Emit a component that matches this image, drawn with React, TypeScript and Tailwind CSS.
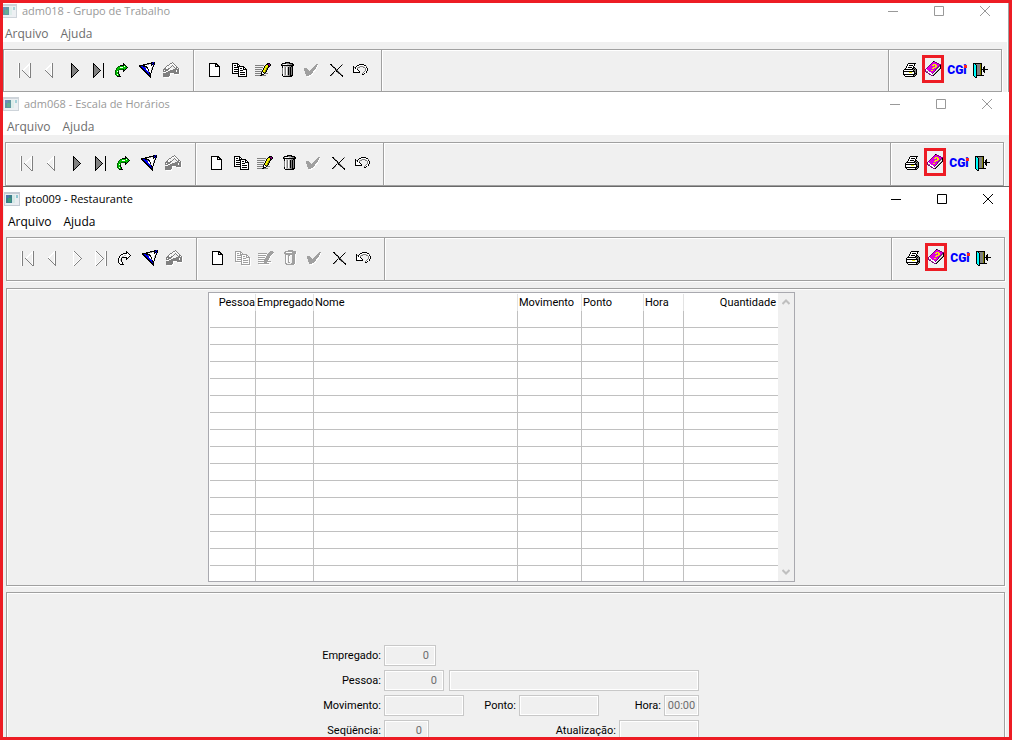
import { useId } from "react";
import clsx from "clsx";

const palette: Record<string, string> = {
  k: "#000000",
  g: "#808080",
  a: "#a0a0a0",
  l: "#c0c0c0",
  w: "#ffffff",
  n: "#00c000",
  d: "#006000",
  b: "#0000ff",
  y: "#f0f000",
  o: "#808000",
  m: "#e000e0",
  p: "#800080",
  c: "#00ffff",
};

interface SpriteData {
  x: number;
  y: number;
  rows: string[];
}

const sprites: Record<string, SpriteData> = {
  first: {
    x: 5,
    y: 5,
    rows: [
      "wg.........wg",
      "wg........wwg",
      "wg.......wwwg",
      "wg......ww.wg",
      "wg.....ww..wg",
      "wg....ww...wg",
      "wg...ww....wg",
      "wg..gw.....wg",
      "wg...g.....wg",
      "wg....g....wg",
      "wg.....g...wg",
      "wg......g..wg",
      "wg.......g.wg",
      "wg........gwg",
      "wg.........gg",
    ],
  },
  prev: {
    x: 8,
    y: 5,
    rows: [
      "......wg",
      ".....wwg",
      "....wwwg",
      "...ww.wg",
      "..ww..wg",
      ".ww...wg",
      "ww....wg",
      "gw....wg",
      ".g....wg",
      "..g...wg",
      "...g..wg",
      "....g.wg",
      ".....gwg",
      "......gg",
      ".......g",
    ],
  },
  next: {
    x: 10,
    y: 5,
    rows: [
      "k.......",
      "kk......",
      "kgk.....",
      "kggk....",
      "kgggk...",
      "kggggk..",
      "kgggggk.",
      "kggggggk",
      "kgggggk.",
      "kggggk..",
      "kgggk...",
      "kggk....",
      "kgk.....",
      "kk......",
      "k.......",
    ],
  },
  nextOff: {
    x: 9,
    y: 5,
    rows: [
      "wg.......",
      "wwg......",
      "w.wg.....",
      "w..wg....",
      "w...wg...",
      "w....wg..",
      "w.....wg.",
      "w......wg",
      "w.....wg.",
      "w....wg..",
      "w...wg...",
      "w..wg....",
      "w.wg.....",
      "wwg......",
      "wg.......",
    ],
  },
  last: {
    x: 8,
    y: 5,
    rows: [
      "k.........k",
      "kk........k",
      "kgk.......k",
      "kggk......k",
      "kgggk.....k",
      "kggggk....k",
      "kgggggk...k",
      "kggggggk..k",
      "kgggggk...k",
      "kggggk....k",
      "kgggk.....k",
      "kggk......k",
      "kgk.......k",
      "kk........k",
      "k.........k",
    ],
  },
  lastOff: {
    x: 7,
    y: 5,
    rows: [
      "wg........wg",
      "wwg.......wg",
      "w.wg......wg",
      "w..wg.....wg",
      "w...wg....wg",
      "w....wg...wg",
      "w.....wg..wg",
      "w......wg.wg",
      "w.....wg..wg",
      "w....wg...wg",
      "w...wg....wg",
      "w..wg.....wg",
      "w.wg......wg",
      "wwg.......wg",
      "wg........wg",
    ],
  },
  redo: {
    x: 6,
    y: 5,
    rows: [
      "........k....",
      "........kk...",
      ".....kkkknk..",
      "...ddnnnnwnk.",
      "..dnnwwwnnnnk",
      ".dnnnnnnnnnk.",
      ".dnnddddknk..",
      "dnnd....kk...",
      "dnwd....k....",
      "dnnk.........",
      "dnnk.........",
      "dnwnk........",
      ".dnnk........",
      "..kkkk.......",
    ],
  },
  redoOff: {
    x: 6,
    y: 5,
    rows: [
      "........k....",
      "........kk...",
      ".....kkkkwk..",
      "...kkwwwwwwk.",
      "..kwwwllwwwwk",
      ".kwwllwwwwwk.",
      ".kwlkkkkkwk..",
      "kwwk....kk...",
      "kwlk....k....",
      "kwlk.........",
      "kwwk.........",
      "kwwwk........",
      ".kwwk........",
      "..kkkk.......",
    ],
  },
  filter: {
    x: 6,
    y: 4,
    rows: [
      "............kkbk",
      "........kkkkkbkk",
      "....kkkkggwwkkbk",
      "kkkkkkwwwwwwkwk.",
      "kkbbkkkkwwwwwlk.",
      ".kkbbbgkkwwwwk..",
      "..kkbbbwkwwwlk..",
      "...kkbbwwkwwlk..",
      "....kkbbwkwwk...",
      ".....kkbbgwwk...",
      "......kkbbkwk...",
      ".......kkbkk....",
      "........kkbk....",
      ".........kkk....",
      "..........kk....",
      "...........k....",
    ],
  },
  stamp: {
    x: 6,
    y: 4,
    rows: [
      ".........g.......",
      ".......ggwg......",
      "......gww.wg.....",
      "....ggw..g.wg....",
      "...gw...g.g.wg...",
      "..gw...g...g.gg..",
      ".ggwwggw....ggwg.",
      "ggggggw.w.ggggggw",
      "gwgggw.ggggggwggw",
      "gggwwggggggggwggw",
      ".wwgggggggggggggw",
      "gggggggwwwwgggggw",
      "gggggggw....wwww.",
      "gggggggw.........",
      "ggggggw..........",
      ".wwwwww..........",
    ],
  },
  blank: {
    x: 7,
    y: 5,
    rows: [
      "kkkkkkkk...",
      "kwwwwwkkk..",
      "kwwwwwkwkk.",
      "kwwwwwkkkkk",
      "kwwwwwwwwwk",
      "kwwwwwwwwwk",
      "kwwwwwwwwwk",
      "kwwwwwwwwwk",
      "kwwwwwwwwwk",
      "kwwwwwwwwwk",
      "kwwwwwwwwwk",
      "kwwwwwwwwwk",
      "kwwwwwwwwwk",
      "kkkkkkkkkkk",
    ],
  },
  copy: {
    x: 6,
    y: 5,
    rows: [
      "kkkkkk.........",
      "kwwwwkk........",
      "kwkkwkwk.......",
      "kwwwwkkkkkkk...",
      "kwkkkkkwwwwkk..",
      "kwwwwwkwkkwkwk.",
      "kwkkkkkwwwwkkkk",
      "kwwwwwkwkkkwwwk",
      "kwkkkkkwwwwwwwk",
      "kwwwwwkwkkkkkwk",
      "kkkkkkkwwwwwwwk",
      "......kwkkkkkwk",
      "......kwwwwwwwk",
      "......kkkkkkkkk",
    ],
  },
  edit: {
    x: 5,
    y: 5,
    rows: [
      "............kkk.",
      "...........kkppk",
      "ggggggggg.kyykpk",
      ".........kyyykk.",
      "gggggggg.kyyok..",
      "........kyyok...",
      "ggggggg.kyyok...",
      ".......kyyok....",
      "gggggggkyyok....",
      "......kwkok.....",
      "ggggggkwwkggg...",
      "......kkk.......",
      "gggggkkgggg.....",
      "................",
    ],
  },
  editOff: {
    x: 5,
    y: 5,
    rows: [
      "............aaa.",
      "...........aaaaa",
      "aaaaaaaaa.aaaaaw",
      ".wwwwwwwwaaaaaw.",
      "aaaaaaaa.aaaaw..",
      ".wwwwwwwaaaaw...",
      "aaaaaaa.aaaaw...",
      ".wwwwwwaaaaw....",
      "aaaaaaaaaaaw....",
      ".wwwwwaaaaw.....",
      "aaaaaaaaaaaaa...",
      ".wwwwwaaawwwww..",
      "aaaaaaaaaaa.....",
      ".wwwwwwwwwww....",
    ],
  },
  trash: {
    x: 7,
    y: 4,
    rows: [
      "....kkkkk....",
      ".kkkkgggkkkk.",
      "kgwwwwlllggkk",
      "kkkkkkkkkkkkk",
      ".kwlllllggkk.",
      ".kwlgwlkgkgk.",
      ".gwlgwlkgkgk.",
      ".gwlgwlkgkgk.",
      ".gwlgwlkgkgk.",
      ".gwlgwlkgkgk.",
      ".gwlgwlkgkgk.",
      ".gwlgwlkgkgk.",
      ".kwlgwlkgkgk.",
      ".kwllllggkkk.",
      "..kkkkkkkkk..",
    ],
  },
  trashOff: {
    x: 7,
    y: 4,
    rows: [
      "....aaaaa....",
      ".aaaaaaaaaaa.",
      "aawwwwwwaaaaw",
      "aaaaaaaaaaaaw",
      ".aaaaaaaaaaw.",
      ".aw.aawwaaaw.",
      ".aw.aw..aaaw.",
      ".aw.aw..aaaw.",
      ".aw.aw..aaaw.",
      ".aw.aw..aaaw.",
      ".aw.aw..aaaw.",
      ".aw.aw..aaaw.",
      ".aw.aa..aaaw.",
      ".aa....aaaaw.",
      "..aaaaaaaaw..",
    ],
  },
  check: {
    x: 6,
    y: 6,
    rows: [
      "............aa",
      "...........aaw",
      "..........aaaw",
      ".........aaaw.",
      "aaa.....aaaaw.",
      "aaaa...aaaaw..",
      "aaaaa.aaaaww..",
      ".aaaaaaaaww...",
      ".aaaaaaaaw....",
      ".aaaaaaaw.....",
      "..aaaaaww.....",
      "..aaaww.......",
      "...www........",
    ],
  },
  cross: {
    x: 8,
    y: 6,
    rows: [
      "kk..........g",
      ".kg........k.",
      "..kg......k..",
      "...kk....k...",
      "....gk..k....",
      ".....kgk.....",
      ".....gkg.....",
      "....k.kkg....",
      "...k...gkg...",
      "..kg....gkg..",
      ".kg.......kg.",
      "kg.........kk",
      "............k",
    ],
  },
  undo: {
    x: 7,
    y: 6,
    rows: [
      "......kkkkk....",
      "....kkwwwwwkk..",
      "k..kwwlggglwwg.",
      "kgkwlgg...ggwk.",
      "kwkwg.......gwk",
      "kwwwk.......gwk",
      "kwwwwk......gwk",
      "kwwwwwk....gwk.",
      "kkkkkkk...gwwk.",
      ".........gwk...",
      ".........kk....",
    ],
  },
  printer: {
    x: 5,
    y: 5,
    rows: [
      ".....kkkkkkkk.",
      "....kwwwwwwk..",
      "....kwkkkkwk..",
      "...kwwwwwwk...",
      "...kwkkkkwkk..",
      "..kwwwwwwkkgk.",
      ".kkkkkkkkkgkgk",
      "kwwwwwwwwwkggk",
      "kkkkkkkkkkkkgk",
      "kwwwwwyyywwkgk",
      "kwwwwwwwwwwkkk",
      "kkkkkkkkkkkkgk",
      ".kwwwwwwwwkgk.",
      "..kkkkkkkkkk..",
    ],
  },
  book: {
    x: 0,
    y: 0,
    rows: [
      "........kp......",
      ".......pmmpp....",
      "......pmmmmmpp..",
      ".....pmmyyymmmpp",
      "....pmmyymyymmpk",
      "...pmmmmmmyympgk",
      "..pmmmmmyyympgwk",
      ".pmmmmmyymmpgwgk",
      "pwmmmmmmmmpgwgk.",
      "pwwmmmyymmpwgk..",
      "pggwmmmmmpwgk...",
      ".ppwwwmmpwgk....",
      "...pgwwpwgk.....",
      "....ppwwgk......",
      "......ppk.......",
    ],
  },
  door: {
    x: 3,
    y: 5,
    rows: [
      "kkkkkkkkk......",
      "kckggggok......",
      "kcckgggok......",
      "kcckgggok..k...",
      "kcckgggok.kk...",
      "kcckgggok.kk...",
      "kcckgggokkkkkkk",
      "kcckgggok.kk...",
      "kcckgggok.kk...",
      "kcckgggok..k...",
      "kcckgggok......",
      "kcckgggok......",
      "kcckkkkkkkk....",
      ".kck...........",
      "..kk...........",
    ],
  },
};

// Greyed version: dark pixels keep the shape, white pixels give the lower right edge
function greyed(s: SpriteData): SpriteData {
  const dark = (x: number, y: number) => s.rows[y]?.[x] === "k";
  const rows = [];
  for (let y = 0; y <= s.rows.length; y++) {
    let row = "";
    for (let x = 0; x <= s.rows[0].length; x++) {
      row += dark(x, y) ? "a" : dark(x - 1, y - 1) ? "w" : ".";
    }
    rows.push(row);
  }
  return { ...s, rows };
}

sprites.copyOff = greyed(sprites.copy);

function Sprite({ name, size = 24 }: { name: string; size?: number }) {
  const { x, y, rows } = sprites[name];
  return (
    <svg
      width={size}
      height={size}
      viewBox={`0 0 ${size} ${size}`}
      shapeRendering="crispEdges"
      className="block shrink-0"
      aria-hidden
    >
      {rows.flatMap((row, j) =>
        row.split("").map((ch, i) =>
          palette[ch] ? (
            <rect
              key={`${i}-${j}`}
              x={x + i}
              y={y + j}
              width={1}
              height={1}
              fill={palette[ch]}
            />
          ) : null
        )
      )}
    </svg>
  );
}

interface Tool {
  icon: string;
  label: string;
  off?: boolean;
}

function ToolButton({ icon, label, off }: Tool) {
  return (
    <button type="button" aria-label={label} disabled={off} className="h-6 w-6">
      <Sprite name={icon} />
    </button>
  );
}

const cell =
  "flex items-center border-y border-r border-[#a0a0a0] pb-0.5 shadow-[inset_1px_1px_0_#fff]";

function Toolbar({ browsing, className }: { browsing: boolean; className: string }) {
  const navigation: Tool[] = [
    { icon: "first", label: "Primeiro", off: true },
    { icon: "prev", label: "Anterior", off: true },
    { icon: browsing ? "next" : "nextOff", label: "Próximo", off: !browsing },
    { icon: browsing ? "last" : "lastOff", label: "Último", off: !browsing },
    { icon: browsing ? "redo" : "redoOff", label: "Ir para", off: !browsing },
    { icon: "filter", label: "Filtro" },
    { icon: "stamp", label: "Carimbo", off: true },
  ];
  const editing: Tool[] = [
    { icon: "blank", label: "Novo" },
    { icon: browsing ? "copy" : "copyOff", label: "Copiar", off: !browsing },
    { icon: browsing ? "edit" : "editOff", label: "Editar", off: !browsing },
    { icon: browsing ? "trash" : "trashOff", label: "Excluir", off: !browsing },
    { icon: "check", label: "Confirmar", off: true },
    { icon: "cross", label: "Cancelar" },
    { icon: "undo", label: "Desfazer" },
  ];

  return (
    <div
      role="toolbar"
      className={clsx(
        "mr-[5px] ml-0.5 flex border-l border-[#a0a0a0] shadow-[1px_1px_0_#fff]",
        className
      )}
    >
      <div className={clsx(cell, "w-[190px] pl-[9px]")}>
        {navigation.map((t) => (
          <ToolButton key={t.label} {...t} />
        ))}
      </div>
      <div className={clsx(cell, "w-[188px] pl-2")}>
        {editing.map((t) => (
          <ToolButton key={t.label} {...t} />
        ))}
      </div>
      <div className={clsx(cell, "flex-1")} />
      <div className={clsx(cell, "w-[113px] pl-[9px]")}>
        <ToolButton icon="printer" label="Imprimir" />
        <button
          type="button"
          aria-label="Manual"
          className="mb-0.5 flex h-7 w-[22px] items-center border-[3px] border-[#ed1c24]"
        >
          <Sprite name="book" size={16} />
        </button>
        <button
          type="button"
          className="relative h-6 w-[26px] font-['Roboto',sans-serif] text-xs font-black text-[#0000ff]"
        >
          CGi
          <span className="absolute top-[7px] right-[3px] h-[3px] w-[3px] bg-[#ff2020]" />
        </button>
        <ToolButton icon="door" label="Sair" />
      </div>
    </div>
  );
}

function AppIcon({ active }: { active: boolean }) {
  return (
    <svg
      width="16"
      height="14"
      viewBox="0 0 16 14"
      shapeRendering="crispEdges"
      className={clsx("shrink-0", !active && "opacity-80")}
      aria-hidden
    >
      <path d="M0 0h16v14H0z" fill="#c3cad2" />
      <path d="M1 2h14v11H1z" fill="#e9edf1" />
      <path d="M2 3h6v8H2z" fill="#3b7f8c" />
      <path d="M2 3h3v3H2z" fill="#4a74a8" />
      <path d="M4 6h3v4H4z" fill="#3f9a78" />
      <path d="M8 3h3v8H8z" fill="#d5e9e6" />
      <path d="M12 3h2v3h-2z" fill="#8fc7d0" />
    </svg>
  );
}

function WindowControls() {
  const glyphs = [
    { label: "Minimizar", d: "M0 5.5h10" },
    { label: "Maximizar", d: "M.5 .5h9v9h-9z" },
    { label: "Fechar", d: "M0 0l10 10M10 0L0 10" },
  ];
  return (
    <div className="-mr-px ml-auto flex">
      {glyphs.map((g) => (
        <button
          key={g.label}
          type="button"
          aria-label={g.label}
          className="flex h-4 w-[46px] items-center justify-center"
        >
          <svg width="10" height="10" viewBox="0 0 10 10" fill="none" stroke="currentColor" aria-hidden>
            <path d={g.d} />
          </svg>
        </button>
      ))}
    </div>
  );
}

function WindowHeader({
  title,
  active = false,
  className,
}: {
  title: string;
  active?: boolean;
  className?: string;
}) {
  return (
    <header
      className={clsx(
        "mb-[7px] bg-white font-['Open_Sans','Noto_Sans',sans-serif] leading-4",
        className
      )}
    >
      <div
        className={clsx(
          "flex h-4 items-center",
          active ? "text-black" : "text-[#999999]"
        )}
      >
        <AppIcon active={active} />
        <h2 className="ml-[5px] text-[11px] whitespace-nowrap">{title}</h2>
        <WindowControls />
      </div>
      <nav
        className={clsx(
          "mt-[7px] flex h-4 gap-3 pl-1 text-xs",
          active ? "text-black" : "text-[#6d6d6d]"
        )}
      >
        <button type="button">Arquivo</button>
        <button type="button">Ajuda</button>
      </nav>
    </header>
  );
}

const columns = [
  { name: "Pessoa", width: "w-[46px]", right: true },
  { name: "Empregado", width: "w-[58px]" },
  { name: "Nome", width: "w-[204px]" },
  { name: "Movimento", width: "w-16" },
  { name: "Ponto", width: "w-[62px]" },
  { name: "Hora", width: "w-10" },
  { name: "Quantidade", width: "w-[94px]", right: true },
];

function MealsTable() {
  return (
    <div className="flex border border-[#a9a9af] bg-white">
      <table className="mt-px ml-px w-[568px] table-fixed border-separate border-spacing-0">
        <thead>
          <tr className="h-[17px]">
            {columns.map((c) => (
              <th
                key={c.name}
                scope="col"
                className={clsx(
                  "border-r border-[#e3e3e3] p-0 pl-px font-normal leading-4 last:border-r-0 last:pr-0.5",
                  c.width,
                  c.right ? "text-right" : "text-left"
                )}
              >
                {c.name}
              </th>
            ))}
          </tr>
        </thead>
        <tbody>
          {Array.from({ length: 16 }, (_, r) => (
            <tr key={r} className={clsx("group", r === 15 ? "h-[15px]" : "h-[17px]")}>
              {columns.map((c) => (
                <td
                  key={c.name}
                  className="border-r border-b border-[#c0c0c0] p-0 group-last:border-b-0 last:border-r-0"
                />
              ))}
            </tr>
          ))}
        </tbody>
      </table>
      <div className="flex w-4 flex-col items-center justify-between bg-[#f0f0f0] py-1.5 text-[#bfbfbf]">
        <svg width="8" height="6" viewBox="0 0 8 6" fill="none" stroke="currentColor" strokeWidth="2" aria-hidden>
          <path d="M.5 5L4 1.5L7.500 5" />
        </svg>
        <svg width="8" height="6" viewBox="0 0 8 6" fill="none" stroke="currentColor" strokeWidth="2" aria-hidden>
          <path d="M.5 1L4 4.500L7.500 1" />
        </svg>
      </div>
    </div>
  );
}

const fieldBox =
  "h-[21px] border border-[#c8c8c8] bg-[#f0f0f0] text-[#6d6d6d] shadow-[inset_0_0_0_1px_#fff]";

function Field({
  label,
  value = "",
  labelClass,
  inputClass,
}: {
  label: string;
  value?: string;
  labelClass: string;
  inputClass: string;
}) {
  const id = useId();
  return (
    <>
      <label htmlFor={id} className={clsx("mr-[3px] text-right", labelClass)}>
        {label}:
      </label>
      <input id={id} value={value} disabled readOnly className={clsx(fieldBox, inputClass)} />
    </>
  );
}

function MealForm() {
  return (
    <form className="flex w-[395px] flex-col gap-1">
      <div className="flex items-center">
        <Field label="Empregado" value="0" labelClass="w-[77px]" inputClass="w-[52px] pr-1.5 text-right" />
      </div>
      <div className="flex items-center">
        <Field label="Pessoa" value="0" labelClass="w-[77px]" inputClass="w-[60px] pr-1.5 text-right" />
        <input
          aria-label="Nome da pessoa"
          disabled
          className={clsx(fieldBox, "ml-[5px] min-w-0 flex-1")}
        />
      </div>
      <div className="flex items-center">
        <Field label="Movimento" labelClass="w-[77px]" inputClass="w-20" />
        <Field label="Ponto" labelClass="w-[52px]" inputClass="w-20" />
        <Field label="Hora" value="00:00" labelClass="flex-1" inputClass="w-[35px] text-center" />
      </div>
      <div className="flex items-center">
        <Field label="Seqüência" value="0" labelClass="w-[77px]" inputClass="w-[45px] pr-1.5 text-right" />
        <Field label="Atualização" labelClass="flex-1" inputClass="w-20" />
      </div>
    </form>
  );
}

const panel =
  "mr-[5px] ml-0.5 flex justify-center border border-[#a0a0a0] pr-2 shadow-[inset_1px_1px_0_#fff,1px_1px_0_#fff]";

export default function App() {
  return (
    <main className="flex h-screen flex-col overflow-hidden border-[3px] border-[#ed1c24] bg-[#f0f0f0] font-['Roboto',sans-serif] text-[11px] leading-4 text-black">
      <div className="shrink-0 overflow-hidden border-r border-[#a0a0a0] bg-white">
        <section className="mr-px -ml-0.5 bg-[#f0f0f0]">
          <WindowHeader title="adm018 - Grupo de Trabalho" />
          <Toolbar browsing className="h-[43px]" />
        </section>
      </div>

      <section className="relative shrink-0 bg-[#f0f0f0]">
        <WindowHeader title="adm068 - Escala de Horários" className="pt-1" />
        <Toolbar browsing className="h-11" />
      </section>

      <section className="relative -mr-px flex flex-1 flex-col border-t border-[#696969] bg-[#f0f0f0] pl-px">
        <WindowHeader title="pto009 - Restaurante" active className="pt-1" />
        <Toolbar browsing={false} className="h-11 shrink-0" />
        <div className={clsx(panel, "mt-[7px] py-[3px]")}>
          <MealsTable />
        </div>
        <div className={clsx(panel, "mt-1.5 flex-1 border-b-0 pt-[52px]")}>
          <MealForm />
        </div>
      </section>
    </main>
  );
}
